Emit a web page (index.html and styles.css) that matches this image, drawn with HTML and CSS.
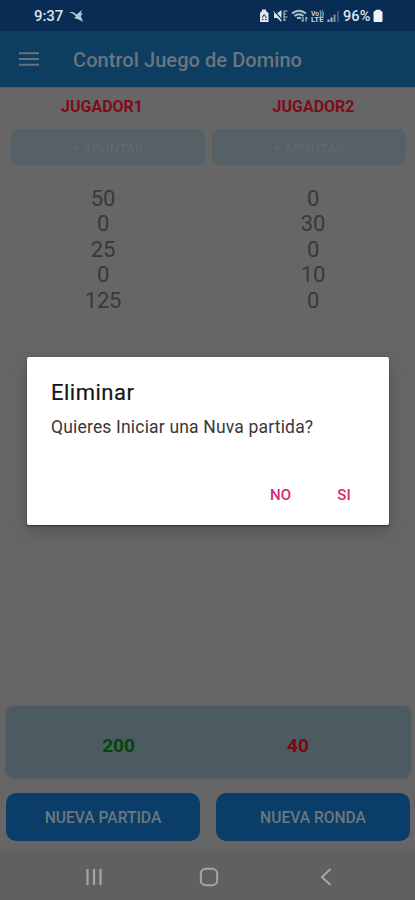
FILE: index.html
```html
<!DOCTYPE html>
<html lang="es">
<head>
<meta charset="utf-8">
<title>Control Juego de Domino</title>
<link rel="stylesheet" href="styles.css">
</head>
<body>
<div class="screen">
  <div class="status">
    <span class="time">9:37</span>
    <svg class="bird" width="16" height="15" viewBox="0 0 16 15"><path d="M0 3.300L4 3L7.500 5.500L13 1L11.800 4.500L13.800 4.200L11.800 7.300L14 12.800L9.500 10.500L5 9L7 7.500L4 4.800Z" fill="#b9c6d2"/></svg>
    <svg class="indicators" width="82" height="16" viewBox="0 0 82 16">
      <path d="M1 5L3 3V1.500H7V3L9.500 5V14H1Z" fill="#e2e8ee"/>
      <path d="M3 10L5.200 6.500L7.500 10M2.800 11.500H4.500M6 11.500H7.700" stroke="#173a60" fill="none"/>
      <path d="M15 5.500H18L22.500 2V14L18 10H15Z" fill="#dce3ea"/>
      <path d="M15 2.500L24 13" stroke="#082c54" stroke-width="1.200"/>
      <path d="M14.500 3.500L22 12" stroke="#dce3ea"/>
      <path d="M25 3H28.500M25 6H27M25 9H28.500M25 12H27M25 3V13" stroke="#b9c6d3" fill="none"/>
      <path d="M33 5.500Q40 0 47 5.500M35.500 8Q40 4.500 44.500 8M38 10.500Q40 9 42 10.500" stroke="#b5c3cf" stroke-width="2" fill="none"/>
      <path d="M44 9V13.500L42.500 12M47 13.500V9L48.500 10.500" stroke="#dce3ea" fill="none"/>
      <text x="52" y="7.500" textLength="13" lengthAdjust="spacingAndGlyphs">Vo))</text>
      <text x="52" y="14" textLength="12.500" lengthAdjust="spacingAndGlyphs">LTE</text>
      <path d="M69.500 14V11.500M72.500 14V9.500" stroke="#a9b7c5" stroke-width="2"/>
      <path d="M75.500 14V6.500" stroke="#7f93a8" stroke-width="2"/>
      <path d="M79 14V3" stroke="#3d5876" stroke-width="2"/>
    </svg>
    <span class="percent">96%</span>
    <svg width="10" height="14" viewBox="0 0 10 14"><path d="M.5 3Q.5 2 2.500 2V.8H7.500V2Q9.500 2 9.500 3V12Q9.500 13 8.500 13H1.500Q.5 13 .5 12Z" fill="#f0f3f6"/></svg>
  </div>
  <header class="appbar">
    <svg width="20" height="16" viewBox="0 0 20 16"><path d="M0 2.200H20M0 8H20M0 13.800H20" stroke="#65717b" stroke-width="2"/></svg>
    <h1>Control Juego de Domino</h1>
  </header>
  <main>
    <div class="players"><span>JUGADOR1</span><span>JUGADOR2</span></div>
    <div class="addrow"><button>+ APUNTAR</button><button>+ APUNTAR</button></div>
    <div class="scores">
      <div><p>50</p><p>0</p><p>25</p><p>0</p><p>125</p></div>
      <div><p>0</p><p>30</p><p>0</p><p>10</p><p>0</p></div>
    </div>
    <div class="totals"><span class="win">200</span><span class="lose">40</span></div>
    <div class="actions"><button>NUEVA PARTIDA</button><button>NUEVA RONDA</button></div>
  </main>
  <nav>
    <svg width="18" height="18" viewBox="0 0 18 18"><path d="M2.500 1V17M9 1V17M15.500 1V17" stroke="#a4a4a4" stroke-width="2.300"/></svg>
    <svg class="home" width="20" height="20" viewBox="0 0 20 20"><rect x="1.800" y="1.800" width="16.400" height="16.400" rx="5" fill="none" stroke="#a6a6a6" stroke-width="2"/></svg>
    <svg width="12" height="18" viewBox="0 0 12 18"><path d="M10.500 1L2 9L10.500 17" fill="none" stroke="#a6a6a6" stroke-width="2"/></svg>
  </nav>
  <section class="dialog" role="dialog">
    <h2>Eliminar</h2>
    <p>Quieres Iniciar una Nuva partida?</p>
    <div class="choices"><button>NO</button><button>SI</button></div>
  </section>
</div>
</body>
</html>
```
FILE: styles.css
```css
* { box-sizing: border-box; }
body { margin: 0; font-family: Roboto, sans-serif; }
h1, h2, p { margin: 0; }
button { border: 0; padding: 0; font-family: inherit; font-weight: 500; }
.screen { position: relative; width: 415px; height: 900px; display: flex; flex-direction: column; overflow: hidden; background: #666; }
.status { height: 31px; padding: 1px 32px 0 34px; display: flex; align-items: center; background: #082c54; color: #dce3ea; font-size: 15px; font-weight: 500; }
.time { width: 30px; letter-spacing: -.1px; }
.bird { margin-left: 5px; }
.indicators { margin-left: auto; }
.indicators text { font-size: 7px; font-weight: 700; fill: #c6d1dc; }
.percent { margin-left: 2px; width: 30px; font-size: 14.500px; letter-spacing: .1px; white-space: nowrap; }
.appbar { height: 56px; padding-left: 19px; display: flex; align-items: center; gap: 34px; background: #0d3d61; }
h1 { font-size: 20px; font-weight: 500; letter-spacing: .07px; color: #6b757d; padding-top: 2px; }
main { flex: 1; display: flex; flex-direction: column; border-top: 1px solid #525e68; }
.players { height: 37px; display: grid; grid-template-columns: 204px 211px; align-items: center; text-align: center; font-size: 16px; font-weight: 700; color: #810b18; }
.players span:last-child { padding-left: 8px; }
.addrow { height: 48px; margin: 0 4px 3px 5px; padding: 4px 0 0 5px; display: flex; gap: 7px; border: 1px solid #616161; border-top: 0; border-radius: 7px; }
.addrow button { width: 194px; height: 36px; padding-top: 2px; border-radius: 8px; background: #566067; color: #60686c; font-size: 13.500px; font-weight: 500; }
.scores { padding-top: 10px; display: flex; justify-content: space-between; text-align: center; font-size: 22px; line-height: 25.400px; letter-spacing: -.2px; color: #393939; }
.scores div { width: 206px; }
.scores div:last-child { width: 204px; }
.totals { height: 71px; margin: auto 4px 1px 6px; padding-top: 8px; border-radius: 8px; display: flex; align-items: center; background: #4c5a62; box-shadow: 0 1px 3px #535353; font-size: 19px; font-weight: 700; text-align: center; }
.win { width: 225px; color: #064509; }
.lose { width: 134px; color: #7d080d; }
.actions { height: 73px; padding: 15px 5px 0 6px; display: flex; justify-content: space-between; }
.actions button { width: 194px; height: 48px; padding-top: 1px; border-radius: 10px; background: #0a3e68; color: #6d777e; font-size: 15.600px; }
nav { height: 49px; background: #606060; padding: 3px 83px 0 85px; display: flex; justify-content: space-between; align-items: center; }
.home { margin-right: 5px; }
.dialog { position: absolute; left: 27px; top: 357px; width: 362px; height: 168px; padding: 23px 24px; background: #fff; border-radius: 2px; box-shadow: 0 1px 2px #333, 0 7px 16px #4848488c; }
h2 { font-size: 22px; line-height: 25px; font-weight: 400; letter-spacing: .5px; color: #161616; -webkit-text-stroke: .2px #161616; }
.dialog p { margin-top: 12px; font-size: 17.500px; line-height: 20px; letter-spacing: .18px; color: #383838; }
.choices { margin-top: 46px; display: flex; justify-content: flex-end; gap: 46px; padding-right: 14px; }
.choices button { background: none; color: #d8286f; font-size: 15px; line-height: 25px; letter-spacing: .2px; }
```
